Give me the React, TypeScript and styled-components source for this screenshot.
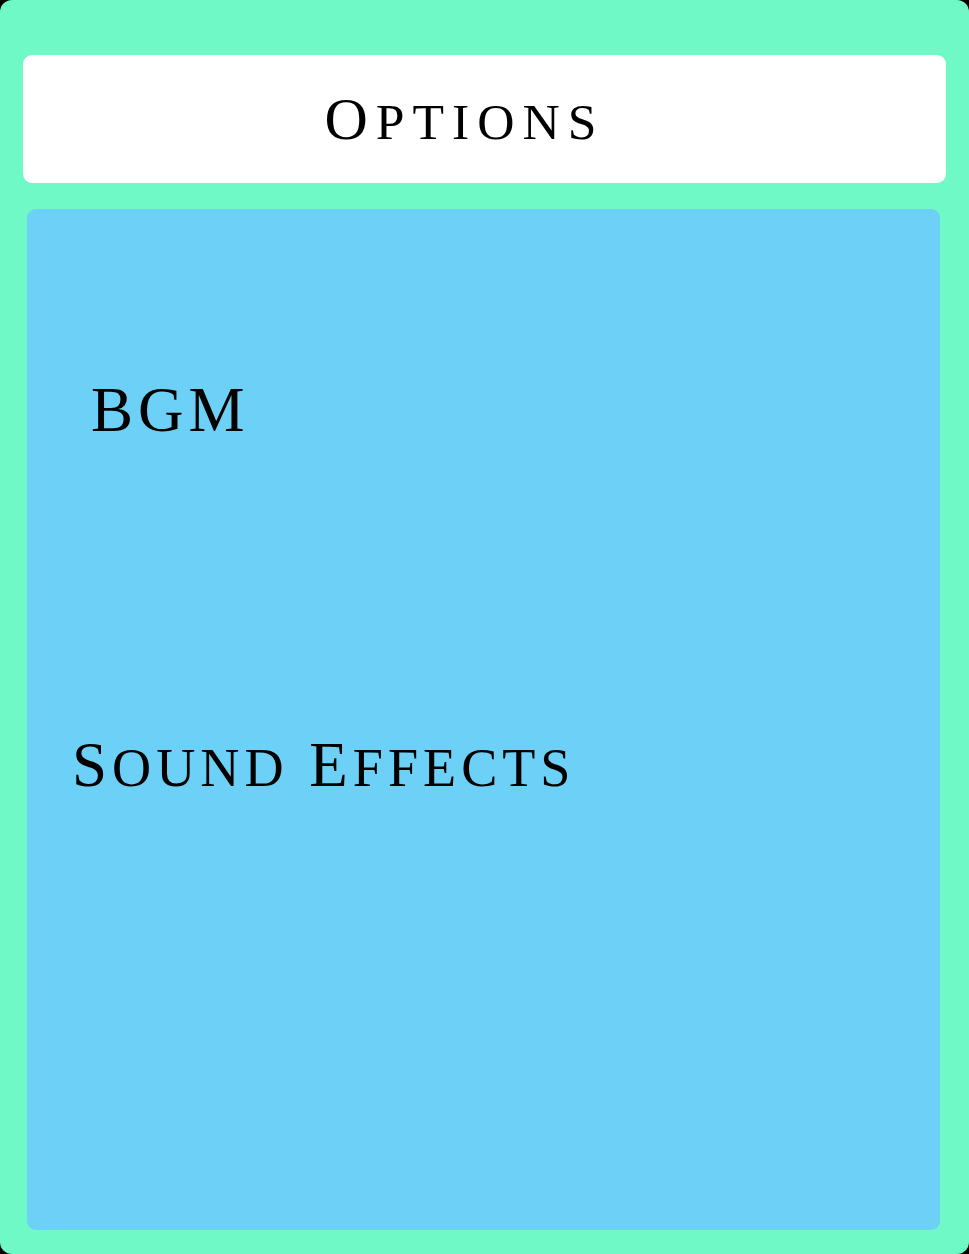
import React from "react";
import styled, { createGlobalStyle } from "styled-components";

const Global = createGlobalStyle`
  html, body { margin: 0; padding: 0; background: #000; }
  #root { width: 969px; height: 1254px; }
`;

const Frame = styled.div`
  width: 969px;
  height: 1254px;
  box-sizing: border-box;
  background: #6ef9c6;
  border-radius: 12px;
  padding: 55px 23px 24px 23px;
  display: flex;
  flex-direction: column;
  gap: 26px;
`;

const Header = styled.header`
  height: 128px;
  background: #ffffff;
  border-radius: 9px;
  display: flex;
  align-items: center;
  justify-content: center;
  padding-right: 40px;
`;

const Panel = styled.main`
  flex: 1;
  margin: 0 6px 0 4px;
  background: #6dd0f6;
  border-radius: 9px;
  padding-top: 170px;
  display: flex;
  flex-direction: column;
`;

const Title = styled.h1<{ $size: number; $spacing: number; $indent?: number }>`
  margin: 0 0 0 ${(p) => p.$indent ?? 0}px;
  font-family: "Liberation Serif", "Times New Roman", serif;
  font-weight: normal;
  font-size: ${(p) => p.$size}px;
  line-height: 1;
  letter-spacing: ${(p) => p.$spacing}px;
  color: #000;
  white-space: nowrap;
`;

const Small = styled.span`
  font-size: 0.86em;
  text-transform: uppercase;
`;

const Section = styled.section<{ $height: number }>`
  height: ${(p) => p.$height}px;
`;

function Caps({ text }: { text: string }) {
  const words = text.split(" ");
  return (
    <>
      {words.map((w, i) => (
        <React.Fragment key={i}>
          {i > 0 ? " " : ""}
          {w[0]}
          <Small>{w.slice(1)}</Small>
        </React.Fragment>
      ))}
    </>
  );
}

export default function App() {
  return (
    <>
      <Global />
      <Frame>
        <Header>
          <Title $size={60} $spacing={8}>
            <Caps text="Options" />
          </Title>
        </Header>
        <Panel>
          <Section $height={355}>
            <Title $size={63} $spacing={5} $indent={64}>
              BGM
            </Title>
          </Section>
          <Section $height={300}>
            <Title $size={63} $spacing={5} $indent={45}>
              <Caps text="Sound Effects" />
            </Title>
          </Section>
        </Panel>
      </Frame>
    </>
  );
}
